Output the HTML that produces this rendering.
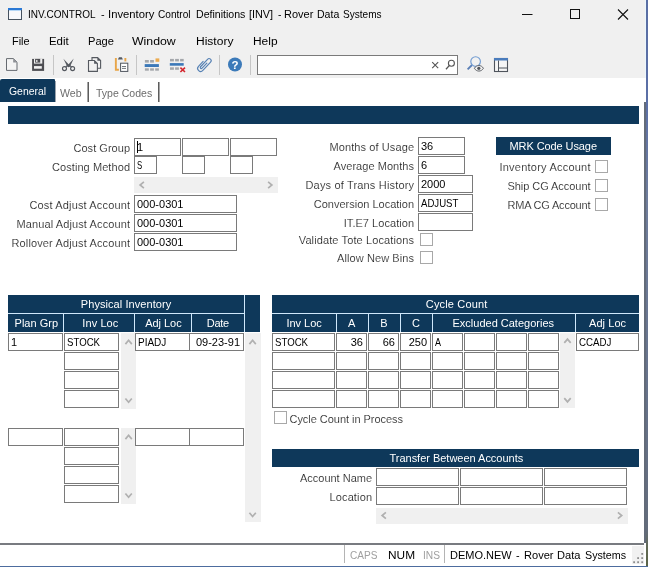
<!DOCTYPE html>
<html><head><meta charset="utf-8"><title>INV.CONTROL</title>
<style>
html,body{margin:0;padding:0;}
body{width:648px;height:567px;overflow:hidden;background:#fff;position:relative;font-family:"Liberation Sans",sans-serif;}
#r{position:absolute;left:0;top:0;width:648px;height:567px;overflow:hidden;will-change:transform;}
#r div{position:absolute;box-sizing:content-box;}
#r span{position:absolute;white-space:pre;display:block;}
#r svg{position:absolute;left:0;top:0;}
</style></head><body><div id="r">
<div style="left:0px;top:0px;width:648px;height:78px;background:#f0f0f0;"></div>
<div style="left:646px;top:0px;width:2px;height:567px;background:linear-gradient(to bottom,#596ea4 0,#5b6fa6 100px,#6f7d9c 200px,#66728a 400px,#636c7c 530px,#626a55 548px,#5a6345 567px);"></div>
<div style="left:645px;top:0px;width:1px;height:78px;background:#eaf6fd;"></div>
<div style="left:644px;top:102px;width:2px;height:441px;background:#636b79;"></div>
<div style="left:0px;top:543px;width:644px;height:2px;background:#787b80;"></div>
<div style="left:0px;top:566px;width:648px;height:1px;background:#4d6c9e;"></div>
<div style="left:632px;top:546px;width:12px;height:18px;background:#f1f1f1;"></div>
<span style="left:27.90px;top:7.59px;font-size:11.5px;line-height:12.845px;color:#000;transform-origin:0 0;transform:scaleX(0.8706);">INV.CONTROL</span>
<span style="left:100.60px;top:7.59px;font-size:11.5px;line-height:12.845px;color:#000;transform-origin:0 0;transform:scaleX(0.9404);">-</span>
<span style="left:108.00px;top:7.59px;font-size:11.5px;line-height:12.845px;color:#000;transform-origin:0 0;transform:scaleX(0.9789);">Inventory</span>
<span style="left:158.40px;top:7.59px;font-size:11.5px;line-height:12.845px;color:#000;transform-origin:0 0;transform:scaleX(0.8792);">Control</span>
<span style="left:195.60px;top:7.59px;font-size:11.5px;line-height:12.845px;color:#000;transform-origin:0 0;transform:scaleX(0.9201);">Definitions</span>
<span style="left:248.60px;top:7.59px;font-size:11.5px;line-height:12.845px;color:#000;transform-origin:0 0;transform:scaleX(0.9428);">[INV]</span>
<span style="left:278.00px;top:7.59px;font-size:11.5px;line-height:12.845px;color:#000;transform-origin:0 0;transform:scaleX(0.8882);">-</span>
<span style="left:283.50px;top:7.59px;font-size:11.5px;line-height:12.845px;color:#000;transform-origin:0 0;transform:scaleX(0.9553);">Rover</span>
<span style="left:316.50px;top:7.59px;font-size:11.5px;line-height:12.845px;color:#000;transform-origin:0 0;transform:scaleX(0.9178);">Data</span>
<span style="left:342.80px;top:7.59px;font-size:11.5px;line-height:12.845px;color:#000;transform-origin:0 0;transform:scaleX(0.8754);">Systems</span>
<span style="left:11.60px;top:34.41px;font-size:11.7px;line-height:13.069px;color:#000;transform-origin:0 0;transform:scaleX(0.9348);">File</span>
<span style="left:48.60px;top:34.41px;font-size:11.7px;line-height:13.069px;color:#000;transform-origin:0 0;transform:scaleX(0.9781);">Edit</span>
<span style="left:87.50px;top:34.41px;font-size:11.7px;line-height:13.069px;color:#000;transform-origin:0 0;transform:scaleX(0.9488);">Page</span>
<span style="left:132.10px;top:34.41px;font-size:11.7px;line-height:13.069px;color:#000;transform-origin:0 0;transform:scaleX(1.0526);">Window</span>
<span style="left:195.80px;top:34.41px;font-size:11.7px;line-height:13.069px;color:#000;transform-origin:0 0;transform:scaleX(1.0286);">History</span>
<span style="left:252.80px;top:34.41px;font-size:11.7px;line-height:13.069px;color:#000;transform-origin:0 0;transform:scaleX(1.0195);">Help</span>
<div style="left:53px;top:55px;width:1px;height:20px;background:#c6c6c6;"></div>
<div style="left:136px;top:55px;width:1px;height:20px;background:#c6c6c6;"></div>
<div style="left:219px;top:55px;width:1px;height:20px;background:#c6c6c6;"></div>
<div style="left:250px;top:55px;width:1px;height:20px;background:#c6c6c6;"></div>
<div style="left:257px;top:55px;width:199px;height:18px;border:1px solid #7a7a7a;background:#fff;"></div>
<div style="left:0px;top:79px;width:55px;height:23px;background:#0e385a;border-radius:2px 1px 0 0;"></div>
<div style="left:55px;top:81px;width:1px;height:21px;background:#9aa3ad;"></div>
<span style="left:8.60px;top:84.59px;font-size:11.5px;line-height:12.845px;color:#fff;transform-origin:0 0;transform:scaleX(0.9045);">General</span>
<span style="left:59.70px;top:86.75px;font-size:11px;line-height:12.287px;color:#6d6d6d;transform-origin:0 0;transform:scaleX(0.9633);">Web</span>
<span style="left:95.90px;top:86.75px;font-size:11px;line-height:12.287px;color:#6d6d6d;transform-origin:0 0;transform:scaleX(0.9574);">Type Codes</span>
<div style="left:87px;top:82px;width:1px;height:20px;background:#a6a6a6;"></div>
<div style="left:88px;top:82px;width:1px;height:20px;background:#5c5c5c;"></div>
<div style="left:158px;top:82px;width:1px;height:20px;background:#5c5c5c;"></div>
<div style="left:159px;top:82px;width:1px;height:20px;background:#a6a6a6;"></div>
<div style="left:8px;top:106px;width:631px;height:18px;background:#0e385a;"></div>
<span style="left:73.50px;top:142.04px;font-size:11px;line-height:12.287px;letter-spacing:0.028px;color:#1c1c1c;-webkit-text-stroke:0.14px #fff;">Cost Group</span>
<span style="left:52.00px;top:161.04px;font-size:11px;line-height:12.287px;letter-spacing:0.074px;color:#1c1c1c;-webkit-text-stroke:0.14px #fff;">Costing Method</span>
<span style="left:29.50px;top:199.04px;font-size:11px;line-height:12.287px;letter-spacing:0.148px;color:#1c1c1c;-webkit-text-stroke:0.14px #fff;">Cost Adjust Account</span>
<span style="left:16.50px;top:218.04px;font-size:11px;line-height:12.287px;letter-spacing:0.110px;color:#1c1c1c;-webkit-text-stroke:0.14px #fff;">Manual Adjust Account</span>
<span style="left:11.50px;top:237.04px;font-size:11px;line-height:12.287px;letter-spacing:0.133px;color:#1c1c1c;-webkit-text-stroke:0.14px #fff;">Rollover Adjust Account</span>
<span style="left:329.50px;top:141.04px;font-size:11px;line-height:12.287px;letter-spacing:0.096px;color:#1c1c1c;-webkit-text-stroke:0.14px #fff;">Months of Usage</span>
<span style="left:333.50px;top:160.04px;font-size:11px;line-height:12.287px;letter-spacing:0.046px;color:#1c1c1c;-webkit-text-stroke:0.14px #fff;">Average Months</span>
<span style="left:305.50px;top:179.04px;font-size:11px;line-height:12.287px;letter-spacing:0.168px;color:#1c1c1c;-webkit-text-stroke:0.14px #fff;">Days of Trans History</span>
<span style="left:313.75px;top:198.04px;font-size:11px;line-height:12.287px;letter-spacing:-0.002px;color:#1c1c1c;-webkit-text-stroke:0.14px #fff;">Conversion Location</span>
<span style="left:343.75px;top:217.04px;font-size:11px;line-height:12.287px;letter-spacing:0.041px;color:#1c1c1c;-webkit-text-stroke:0.14px #fff;">IT.E7 Location</span>
<span style="left:298.75px;top:234.04px;font-size:11px;line-height:12.287px;letter-spacing:0.115px;color:#1c1c1c;-webkit-text-stroke:0.14px #fff;">Validate Tote Locations</span>
<span style="left:337.00px;top:252.04px;font-size:11px;line-height:12.287px;letter-spacing:0.092px;color:#1c1c1c;-webkit-text-stroke:0.14px #fff;">Allow New Bins</span>
<span style="left:499.50px;top:161.04px;font-size:11px;line-height:12.287px;letter-spacing:0.222px;color:#1c1c1c;-webkit-text-stroke:0.14px #fff;">Inventory Account</span>
<span style="left:507.50px;top:180.04px;font-size:11px;line-height:12.287px;letter-spacing:-0.055px;color:#1c1c1c;-webkit-text-stroke:0.14px #fff;">Ship CG Account</span>
<span style="left:507.50px;top:199.04px;font-size:11px;line-height:12.287px;letter-spacing:-0.199px;color:#1c1c1c;-webkit-text-stroke:0.14px #fff;">RMA CG Account</span>
<div style="left:134px;top:138px;width:45px;height:16px;border:1px solid #7a7a7a;background:#fff;"></div>
<span style="left:137.00px;top:140.54px;font-size:11px;line-height:12.287px;letter-spacing:0.000px;color:#000;">1</span>
<div style="left:134px;top:156px;width:21px;height:16px;border:1px solid #7a7a7a;background:#fff;"></div>
<span style="left:136.75px;top:158.54px;font-size:11px;line-height:12.287px;color:#000;transform-origin:0 0;transform:scaleX(0.7081);">S</span>
<div style="left:182px;top:138px;width:45px;height:16px;border:1px solid #7a7a7a;background:#fff;"></div>
<div style="left:182px;top:156px;width:21px;height:16px;border:1px solid #7a7a7a;background:#fff;"></div>
<div style="left:230px;top:138px;width:45px;height:16px;border:1px solid #7a7a7a;background:#fff;"></div>
<div style="left:230px;top:156px;width:21px;height:16px;border:1px solid #7a7a7a;background:#fff;"></div>
<div style="left:137px;top:141px;width:1px;height:12px;background:#000;"></div>
<div style="left:134px;top:177px;width:144px;height:16px;background:#f0f0f0;"></div>
<div style="left:134px;top:195px;width:101px;height:16px;border:1px solid #7a7a7a;background:#fff;"></div>
<span style="left:137.00px;top:197.54px;font-size:11px;line-height:12.287px;letter-spacing:0.000px;color:#000;">000-0301</span>
<div style="left:134px;top:214px;width:101px;height:16px;border:1px solid #7a7a7a;background:#fff;"></div>
<span style="left:137.00px;top:216.54px;font-size:11px;line-height:12.287px;letter-spacing:0.000px;color:#000;">000-0301</span>
<div style="left:134px;top:233px;width:101px;height:16px;border:1px solid #7a7a7a;background:#fff;"></div>
<span style="left:137.00px;top:235.54px;font-size:11px;line-height:12.287px;letter-spacing:0.000px;color:#000;">000-0301</span>
<div style="left:418px;top:137px;width:45px;height:16px;border:1px solid #7a7a7a;background:#fff;"></div>
<span style="left:421.00px;top:139.54px;font-size:11px;line-height:12.287px;letter-spacing:0.000px;color:#000;">36</span>
<div style="left:418px;top:156px;width:45px;height:16px;border:1px solid #7a7a7a;background:#fff;"></div>
<span style="left:421.00px;top:158.54px;font-size:11px;line-height:12.287px;letter-spacing:0.000px;color:#000;">6</span>
<div style="left:418px;top:175px;width:53px;height:16px;border:1px solid #7a7a7a;background:#fff;"></div>
<span style="left:421.00px;top:177.54px;font-size:11px;line-height:12.287px;letter-spacing:0.000px;color:#000;">2000</span>
<div style="left:418px;top:194px;width:53px;height:16px;border:1px solid #7a7a7a;background:#fff;"></div>
<span style="left:420.75px;top:196.54px;font-size:11px;line-height:12.287px;color:#000;transform-origin:0 0;transform:scaleX(0.8742);">ADJUST</span>
<div style="left:418px;top:213px;width:53px;height:16px;border:1px solid #7a7a7a;background:#fff;"></div>
<div style="left:420px;top:233px;width:11px;height:11px;border:1px solid #a8a8a8;background:#fff;"></div>
<div style="left:420px;top:251px;width:11px;height:11px;border:1px solid #a8a8a8;background:#fff;"></div>
<div style="left:496px;top:137px;width:115px;height:18px;background:#0e385a;"></div>
<span style="left:509.50px;top:139.64px;font-size:11px;line-height:12.287px;letter-spacing:-0.088px;color:#fff;">MRK Code Usage</span>
<div style="left:595px;top:160px;width:11px;height:11px;border:1px solid #a8a8a8;background:#fff;"></div>
<div style="left:595px;top:179px;width:11px;height:11px;border:1px solid #a8a8a8;background:#fff;"></div>
<div style="left:595px;top:198px;width:11px;height:11px;border:1px solid #a8a8a8;background:#fff;"></div>
<div style="left:8px;top:295px;width:252px;height:37px;background:#cfe8fb;"></div>
<div style="left:8px;top:295px;width:236px;height:18px;background:#0e385a;"></div>
<span style="left:80.80px;top:297.65px;font-size:11px;line-height:12.287px;letter-spacing:0.067px;color:#fff;">Physical Inventory</span>
<div style="left:8px;top:314px;width:55px;height:18px;background:#0e385a;"></div>
<span style="left:14.60px;top:316.65px;font-size:11px;line-height:12.287px;letter-spacing:-0.001px;color:#fff;">Plan Grp</span>
<div style="left:64px;top:314px;width:70px;height:18px;background:#0e385a;"></div>
<span style="left:82.30px;top:316.65px;font-size:11px;line-height:12.287px;letter-spacing:0.089px;color:#fff;">Inv Loc</span>
<div style="left:135px;top:314px;width:56px;height:18px;background:#0e385a;"></div>
<span style="left:145.20px;top:316.65px;font-size:11px;line-height:12.287px;letter-spacing:-0.032px;color:#fff;">Adj Loc</span>
<div style="left:192px;top:314px;width:52px;height:18px;background:#0e385a;"></div>
<span style="left:206.70px;top:316.65px;font-size:11px;line-height:12.287px;letter-spacing:-0.245px;color:#fff;">Date</span>
<div style="left:245px;top:295px;width:15px;height:37px;background:#0e385a;"></div>
<div style="left:8px;top:333px;width:53px;height:16px;border:1px solid #7a7a7a;background:#fff;"></div>
<span style="left:11.00px;top:335.55px;font-size:11px;line-height:12.287px;letter-spacing:0.000px;color:#000;">1</span>
<div style="left:64px;top:333px;width:53px;height:16px;border:1px solid #7a7a7a;background:#fff;"></div>
<span style="left:66.75px;top:335.55px;font-size:11px;line-height:12.287px;color:#000;transform-origin:0 0;transform:scaleX(0.8756);">STOCK</span>
<div style="left:64px;top:352px;width:53px;height:16px;border:1px solid #7a7a7a;background:#fff;"></div>
<div style="left:64px;top:371px;width:53px;height:16px;border:1px solid #7a7a7a;background:#fff;"></div>
<div style="left:64px;top:390px;width:53px;height:16px;border:1px solid #7a7a7a;background:#fff;"></div>
<div style="left:121px;top:333px;width:15px;height:75.5px;background:#f0f0f0;"></div>
<div style="left:135px;top:333px;width:53px;height:16px;border:1px solid #7a7a7a;background:#fff;"></div>
<span style="left:137.75px;top:335.55px;font-size:11px;line-height:12.287px;color:#000;transform-origin:0 0;transform:scaleX(0.9079);">PIADJ</span>
<div style="left:189px;top:333px;width:53px;height:16px;border:1px solid #7a7a7a;background:#fff;"></div>
<span style="left:195.97px;top:335.55px;font-size:11px;line-height:12.287px;letter-spacing:0.000px;color:#000;">09-23-91</span>
<div style="left:8px;top:428px;width:53px;height:16px;border:1px solid #7a7a7a;background:#fff;"></div>
<div style="left:64px;top:428px;width:53px;height:16px;border:1px solid #7a7a7a;background:#fff;"></div>
<div style="left:64px;top:447px;width:53px;height:16px;border:1px solid #7a7a7a;background:#fff;"></div>
<div style="left:64px;top:466px;width:53px;height:16px;border:1px solid #7a7a7a;background:#fff;"></div>
<div style="left:64px;top:485px;width:53px;height:16px;border:1px solid #7a7a7a;background:#fff;"></div>
<div style="left:121px;top:428px;width:15px;height:75.5px;background:#f0f0f0;"></div>
<div style="left:135px;top:428px;width:53px;height:16px;border:1px solid #7a7a7a;background:#fff;"></div>
<div style="left:189px;top:428px;width:53px;height:16px;border:1px solid #7a7a7a;background:#fff;"></div>
<div style="left:245px;top:333px;width:15.5px;height:189.3px;background:#f0f0f0;"></div>
<div style="left:272px;top:295px;width:367px;height:37px;background:#cfe8fb;"></div>
<div style="left:272px;top:295px;width:367px;height:18px;background:#0e385a;"></div>
<span style="left:425.80px;top:297.65px;font-size:11px;line-height:12.287px;letter-spacing:0.159px;color:#fff;">Cycle Count</span>
<div style="left:272px;top:314px;width:64px;height:18px;background:#0e385a;"></div>
<span style="left:286.50px;top:316.65px;font-size:11px;line-height:12.287px;letter-spacing:-0.044px;color:#fff;">Inv Loc</span>
<div style="left:337px;top:314px;width:31px;height:18px;background:#0e385a;"></div>
<span style="left:347.90px;top:316.65px;font-size:11px;line-height:12.287px;letter-spacing:0.000px;color:#fff;">A</span>
<div style="left:369px;top:314px;width:31px;height:18px;background:#0e385a;"></div>
<span style="left:380.20px;top:316.65px;font-size:11px;line-height:12.287px;letter-spacing:0.000px;color:#fff;">B</span>
<div style="left:401px;top:314px;width:31px;height:18px;background:#0e385a;"></div>
<span style="left:411.90px;top:316.65px;font-size:11px;line-height:12.287px;letter-spacing:0.000px;color:#fff;">C</span>
<div style="left:433px;top:314px;width:142px;height:18px;background:#0e385a;"></div>
<span style="left:452.50px;top:316.65px;font-size:11px;line-height:12.287px;letter-spacing:-0.000px;color:#fff;">Excluded Categories</span>
<div style="left:576px;top:314px;width:63px;height:18px;background:#0e385a;"></div>
<span style="left:589.00px;top:316.65px;font-size:11px;line-height:12.287px;letter-spacing:0.068px;color:#fff;">Adj Loc</span>
<div style="left:272px;top:333px;width:61px;height:16px;border:1px solid #7a7a7a;background:#fff;"></div>
<span style="left:274.75px;top:335.55px;font-size:11px;line-height:12.287px;color:#000;transform-origin:0 0;transform:scaleX(0.8756);">STOCK</span>
<div style="left:336px;top:333px;width:29px;height:16px;border:1px solid #7a7a7a;background:#fff;"></div>
<span style="left:350.76px;top:335.55px;font-size:11px;line-height:12.287px;letter-spacing:0.000px;color:#000;">36</span>
<div style="left:368px;top:333px;width:29px;height:16px;border:1px solid #7a7a7a;background:#fff;"></div>
<span style="left:382.76px;top:335.55px;font-size:11px;line-height:12.287px;letter-spacing:0.000px;color:#000;">66</span>
<div style="left:400px;top:333px;width:29px;height:16px;border:1px solid #7a7a7a;background:#fff;"></div>
<span style="left:408.65px;top:335.55px;font-size:11px;line-height:12.287px;letter-spacing:0.000px;color:#000;">250</span>
<div style="left:432px;top:333px;width:29px;height:16px;border:1px solid #7a7a7a;background:#fff;"></div>
<span style="left:434.75px;top:335.55px;font-size:11px;line-height:12.287px;color:#000;transform-origin:0 0;transform:scaleX(0.8170);">A</span>
<div style="left:464px;top:333px;width:29px;height:16px;border:1px solid #7a7a7a;background:#fff;"></div>
<div style="left:496px;top:333px;width:29px;height:16px;border:1px solid #7a7a7a;background:#fff;"></div>
<div style="left:528px;top:333px;width:29px;height:16px;border:1px solid #7a7a7a;background:#fff;"></div>
<div style="left:272px;top:352px;width:61px;height:16px;border:1px solid #7a7a7a;background:#fff;"></div>
<div style="left:336px;top:352px;width:29px;height:16px;border:1px solid #7a7a7a;background:#fff;"></div>
<div style="left:368px;top:352px;width:29px;height:16px;border:1px solid #7a7a7a;background:#fff;"></div>
<div style="left:400px;top:352px;width:29px;height:16px;border:1px solid #7a7a7a;background:#fff;"></div>
<div style="left:432px;top:352px;width:29px;height:16px;border:1px solid #7a7a7a;background:#fff;"></div>
<div style="left:464px;top:352px;width:29px;height:16px;border:1px solid #7a7a7a;background:#fff;"></div>
<div style="left:496px;top:352px;width:29px;height:16px;border:1px solid #7a7a7a;background:#fff;"></div>
<div style="left:528px;top:352px;width:29px;height:16px;border:1px solid #7a7a7a;background:#fff;"></div>
<div style="left:272px;top:371px;width:61px;height:16px;border:1px solid #7a7a7a;background:#fff;"></div>
<div style="left:336px;top:371px;width:29px;height:16px;border:1px solid #7a7a7a;background:#fff;"></div>
<div style="left:368px;top:371px;width:29px;height:16px;border:1px solid #7a7a7a;background:#fff;"></div>
<div style="left:400px;top:371px;width:29px;height:16px;border:1px solid #7a7a7a;background:#fff;"></div>
<div style="left:432px;top:371px;width:29px;height:16px;border:1px solid #7a7a7a;background:#fff;"></div>
<div style="left:464px;top:371px;width:29px;height:16px;border:1px solid #7a7a7a;background:#fff;"></div>
<div style="left:496px;top:371px;width:29px;height:16px;border:1px solid #7a7a7a;background:#fff;"></div>
<div style="left:528px;top:371px;width:29px;height:16px;border:1px solid #7a7a7a;background:#fff;"></div>
<div style="left:272px;top:390px;width:61px;height:16px;border:1px solid #7a7a7a;background:#fff;"></div>
<div style="left:336px;top:390px;width:29px;height:16px;border:1px solid #7a7a7a;background:#fff;"></div>
<div style="left:368px;top:390px;width:29px;height:16px;border:1px solid #7a7a7a;background:#fff;"></div>
<div style="left:400px;top:390px;width:29px;height:16px;border:1px solid #7a7a7a;background:#fff;"></div>
<div style="left:432px;top:390px;width:29px;height:16px;border:1px solid #7a7a7a;background:#fff;"></div>
<div style="left:464px;top:390px;width:29px;height:16px;border:1px solid #7a7a7a;background:#fff;"></div>
<div style="left:496px;top:390px;width:29px;height:16px;border:1px solid #7a7a7a;background:#fff;"></div>
<div style="left:528px;top:390px;width:29px;height:16px;border:1px solid #7a7a7a;background:#fff;"></div>
<div style="left:560px;top:333px;width:15px;height:75px;background:#f0f0f0;"></div>
<div style="left:576px;top:333px;width:61px;height:16px;border:1px solid #7a7a7a;background:#fff;"></div>
<span style="left:578.75px;top:335.55px;font-size:11px;line-height:12.287px;color:#000;transform-origin:0 0;transform:scaleX(0.8835);">CCADJ</span>
<div style="left:274px;top:411px;width:11px;height:11px;border:1px solid #a8a8a8;background:#fff;"></div>
<span style="left:289.50px;top:412.55px;font-size:11px;line-height:12.287px;letter-spacing:-0.039px;color:#1c1c1c;-webkit-text-stroke:0.14px #fff;">Cycle Count in Process</span>
<div style="left:272px;top:449px;width:367px;height:18px;background:#0e385a;"></div>
<span style="left:389.50px;top:451.65px;font-size:11px;line-height:12.287px;letter-spacing:-0.017px;color:#fff;">Transfer Between Accounts</span>
<span style="left:300.00px;top:471.75px;font-size:11px;line-height:12.287px;letter-spacing:-0.013px;color:#1c1c1c;-webkit-text-stroke:0.14px #fff;">Account Name</span>
<span style="left:329.50px;top:490.75px;font-size:11px;line-height:12.287px;letter-spacing:0.130px;color:#1c1c1c;-webkit-text-stroke:0.14px #fff;">Location</span>
<div style="left:376px;top:468px;width:81px;height:16px;border:1px solid #7a7a7a;background:#fff;"></div>
<div style="left:460px;top:468px;width:81px;height:16px;border:1px solid #7a7a7a;background:#fff;"></div>
<div style="left:544px;top:468px;width:81px;height:16px;border:1px solid #7a7a7a;background:#fff;"></div>
<div style="left:376px;top:487px;width:81px;height:16px;border:1px solid #7a7a7a;background:#fff;"></div>
<div style="left:460px;top:487px;width:81px;height:16px;border:1px solid #7a7a7a;background:#fff;"></div>
<div style="left:544px;top:487px;width:81px;height:16px;border:1px solid #7a7a7a;background:#fff;"></div>
<div style="left:376px;top:508px;width:252px;height:16px;background:#f0f0f0;"></div>
<div style="left:344px;top:545px;width:1px;height:18px;background:#b4b4b4;"></div>
<div style="left:444px;top:545px;width:1px;height:18px;background:#b4b4b4;"></div>
<span style="left:350.00px;top:548.21px;font-size:11.7px;line-height:13.069px;color:#a0a0a0;transform-origin:0 0;transform:scaleX(0.8640);">CAPS</span>
<span style="left:387.50px;top:548.21px;font-size:11.7px;line-height:13.069px;color:#000;transform-origin:0 0;transform:scaleX(1.0147);">NUM</span>
<span style="left:422.50px;top:548.21px;font-size:11.7px;line-height:13.069px;color:#a0a0a0;transform-origin:0 0;transform:scaleX(0.8725);">INS</span>
<span style="left:449.60px;top:548.21px;font-size:11.7px;line-height:13.069px;color:#000;transform-origin:0 0;transform:scaleX(0.9409);">DEMO.NEW</span>
<span style="left:516.00px;top:548.21px;font-size:11.7px;line-height:13.069px;color:#000;transform-origin:0 0;transform:scaleX(0.9253);">-</span>
<span style="left:523.50px;top:548.21px;font-size:11.7px;line-height:13.069px;color:#000;transform-origin:0 0;transform:scaleX(0.9464);">Rover</span>
<span style="left:557.20px;top:548.21px;font-size:11.7px;line-height:13.069px;color:#000;transform-origin:0 0;transform:scaleX(0.9478);">Data</span>
<span style="left:584.50px;top:548.21px;font-size:11.7px;line-height:13.069px;color:#000;transform-origin:0 0;transform:scaleX(0.9172);">Systems</span>
<svg width="648" height="567" viewBox="0 0 648 567">
<polyline points="143.9,181.8 140.1,185 143.9,188.2" fill="none" stroke="#b0b0b0" stroke-width="1.7"/>
<polyline points="268.1,181.8 271.9,185 268.1,188.2" fill="none" stroke="#b0b0b0" stroke-width="1.7"/>
<polyline points="125.39999999999999,344.09999999999997 128.6,340.3 131.79999999999998,344.09999999999997" fill="none" stroke="#b0b0b0" stroke-width="1.7"/>
<polyline points="125.39999999999999,398.5 128.6,402.29999999999995 131.79999999999998,398.5" fill="none" stroke="#b0b0b0" stroke-width="1.7"/>
<polyline points="125.39999999999999,439.09999999999997 128.6,435.3 131.79999999999998,439.09999999999997" fill="none" stroke="#b0b0b0" stroke-width="1.7"/>
<polyline points="125.39999999999999,493.5 128.6,497.29999999999995 131.79999999999998,493.5" fill="none" stroke="#b0b0b0" stroke-width="1.7"/>
<polyline points="249.4,344.09999999999997 252.6,340.3 255.79999999999998,344.09999999999997" fill="none" stroke="#b0b0b0" stroke-width="1.7"/>
<polyline points="249.4,512.7 252.6,516.5 255.79999999999998,512.7" fill="none" stroke="#b0b0b0" stroke-width="1.7"/>
<polyline points="564.3,342.9 567.5,339.1 570.7,342.9" fill="none" stroke="#b0b0b0" stroke-width="1.7"/>
<polyline points="564.3,398.1 567.5,401.9 570.7,398.1" fill="none" stroke="#b0b0b0" stroke-width="1.7"/>
<polyline points="385.9,512.3 382.1,515.5 385.9,518.7" fill="none" stroke="#b0b0b0" stroke-width="1.7"/>
<polyline points="617.9,512.3 621.6999999999999,515.5 617.9,518.7" fill="none" stroke="#b0b0b0" stroke-width="1.7"/>
<!-- title icon -->
<rect x="8.5" y="9.5" width="13" height="10" fill="#f7f8fb" stroke="#46525f" stroke-width="1"/>
<rect x="8" y="8" width="14" height="2" fill="#2a78d4"/>
<rect x="9" y="10" width="12" height="1" fill="#b4d6f6"/>
<!-- window controls -->
<path d="M522 14.5H532.5" stroke="#111" stroke-width="1" fill="none"/>
<rect x="570.5" y="9.5" width="9" height="9" fill="none" stroke="#111" stroke-width="1"/>
<path d="M618 9.5L628 19.5M628 9.5L618 19.5" stroke="#111" stroke-width="1.1" fill="none"/>
<!-- new doc -->
<path d="M6.5 58.6H13.4L17 62.2V70.4H6.5Z" fill="#f4f4f4" stroke="#666a70" stroke-width="1"/>
<path d="M13.2 58.6V62.4H17Z" fill="#8d9095"/>
<!-- save -->
<rect x="32.1" y="58.9" width="12" height="12" fill="#4d4d52"/>
<rect x="34" y="58.9" width="8.3" height="4.7" fill="#efefef"/>
<rect x="35.1" y="58.9" width="5.1" height="3.7" fill="#4d4d52"/>
<rect x="36.1" y="59.9" width="1.4" height="2.1" fill="#e4e4e4"/>
<rect x="34" y="66.1" width="7.8" height="2.6" fill="#f2f2f2"/>
<!-- scissors -->
<path d="M63.4 58.7L70.4 66.3L68.6 67.2L66.6 65.3Z" fill="#54585f"/>
<path d="M73.8 58.4L66.8 66.3L68.6 67.2L70.6 65.3Z" fill="#54585f"/>
<path d="M67.4 65.4L65.6 67.2M69.8 65.4L71.6 67.2" stroke="#54585f" stroke-width="1.2" fill="none"/>
<circle cx="64.5" cy="68.6" r="2" fill="none" stroke="#54585f" stroke-width="1.15"/>
<circle cx="72.6" cy="68.6" r="2" fill="none" stroke="#54585f" stroke-width="1.15"/>
<!-- copy -->
<path d="M92 57.6H97.6L100.6 60.6V68.2H92Z" fill="#f1f1f1" stroke="#555960" stroke-width="1.1"/>
<path d="M97.4 57.6V60.8H100.6Z" fill="#555960"/>
<path d="M88.5 60.5H94.3L97.4 63.6V71.4H88.5Z" fill="#f1f1f1" stroke="#555960" stroke-width="1.1"/>
<path d="M94.1 60.5V63.8H97.4Z" fill="#555960"/>
<!-- paste -->
<path d="M115.85 58V70.5M114.9 69.8H118.9" fill="none" stroke="#e8a548" stroke-width="1.9"/>
<path d="M125.35 58V61.4" fill="none" stroke="#e8a548" stroke-width="1.9"/>
<path d="M117.9 59.5L119 57.2H121.8L122.9 59.5Z" fill="#555a62"/>
<rect x="120.6" y="63.2" width="7.2" height="8.2" fill="#fff" stroke="#4d535b" stroke-width="1"/>
<path d="M122 66.5H126M122 68.4H126" stroke="#4d535b" stroke-width="0.8"/>
<!-- insert row -->
<g fill="#a4a7ab">
<rect x="144.9" y="60" width="3.9" height="2.6"/><rect x="150.1" y="60" width="3.8" height="2.6"/>
<rect x="144.9" y="68.3" width="3.9" height="2.4"/><rect x="150.1" y="68.3" width="3.8" height="2.4"/><rect x="155.2" y="68.3" width="3.7" height="2.4"/>
</g>
<rect x="144.7" y="64.1" width="14.2" height="2.9" fill="#3b78b8"/>
<rect x="155.5" y="58.4" width="3.8" height="3.4" fill="#ecab50"/>
<!-- delete row -->
<g fill="#a4a7ab">
<rect x="170" y="58.9" width="3.9" height="2.5"/><rect x="175.1" y="58.9" width="3.8" height="2.5"/><rect x="180.1" y="58.9" width="3.6" height="2.5"/>
<rect x="170" y="67.3" width="3.9" height="2.5"/><rect x="175.1" y="67.3" width="3.8" height="2.5"/>
</g>
<rect x="169.8" y="63.1" width="13.9" height="2.6" fill="#3b78b8"/>
<path d="M180.4 67.6L185 72M185 67.6L180.4 72" stroke="#d4262e" stroke-width="1.6" fill="none"/>
<!-- paperclip -->
<g transform="translate(204.3 64.5) rotate(-47)">
<path d="M1.5 -3H-5.3a3 3 0 0 0 0 6H6a2.1 2.1 0 0 0 0 -4.2H-4.2a1.05 1.05 0 0 0 0 2.1H2.8" fill="none" stroke="#5681b4" stroke-width="1.15" stroke-linecap="round"/>
</g>
<!-- help -->
<circle cx="235" cy="64.5" r="7" fill="#3c7ab9"/>
<text x="235" y="68.6" font-family="Liberation Sans, sans-serif" font-weight="bold" font-size="11.5" fill="#fff" text-anchor="middle">?</text>
<!-- search X and magnifier -->
<path d="M432.2 62.2L438.2 68.2M438.2 62.2L432.2 68.2" stroke="#555" stroke-width="1.1" fill="none"/>
<circle cx="451.4" cy="63.2" r="3" fill="none" stroke="#555" stroke-width="1.1"/>
<path d="M449.2 65.6L446 69.2" stroke="#555" stroke-width="1.3" fill="none"/>
<!-- search eye icon -->
<path d="M472 65L467.6 69.4" stroke="#5b7fb6" stroke-width="1.9" fill="none"/>
<circle cx="475.6" cy="61.5" r="4.8" fill="#f1f1f1" stroke="#6f9ad0" stroke-width="1.15"/>
<path d="M474.4 68.3C476.4 64.6 481.4 64.6 483.4 68.3C481.4 72 476.4 72 474.4 68.3Z" fill="#f0f0f0" stroke="#5d6167" stroke-width="1"/>
<circle cx="478.8" cy="68.3" r="1.6" fill="#4f5359"/>
<!-- layout icon -->
<rect x="494.5" y="58.5" width="13" height="13" fill="#f5f5f5" stroke="#4f545c" stroke-width="1.1"/>
<rect x="494" y="58" width="14" height="2.5" fill="#4a7cbc"/>
<path d="M498.5 60.5V71.5M498.5 68H507.5" stroke="#4f545c" stroke-width="1" fill="none"/>
<!-- size grip -->
<g fill="#8e8e8e">
<rect x="641.3" y="553" width="1.8" height="1.8"/>
<rect x="637.2" y="557.2" width="1.8" height="1.8"/><rect x="641.3" y="557.2" width="1.8" height="1.8"/>
<rect x="633.2" y="561.3" width="1.8" height="1.8"/><rect x="637.2" y="561.3" width="1.8" height="1.8"/><rect x="641.3" y="561.3" width="1.8" height="1.8"/>
</g>

</svg>
</div></body></html>
